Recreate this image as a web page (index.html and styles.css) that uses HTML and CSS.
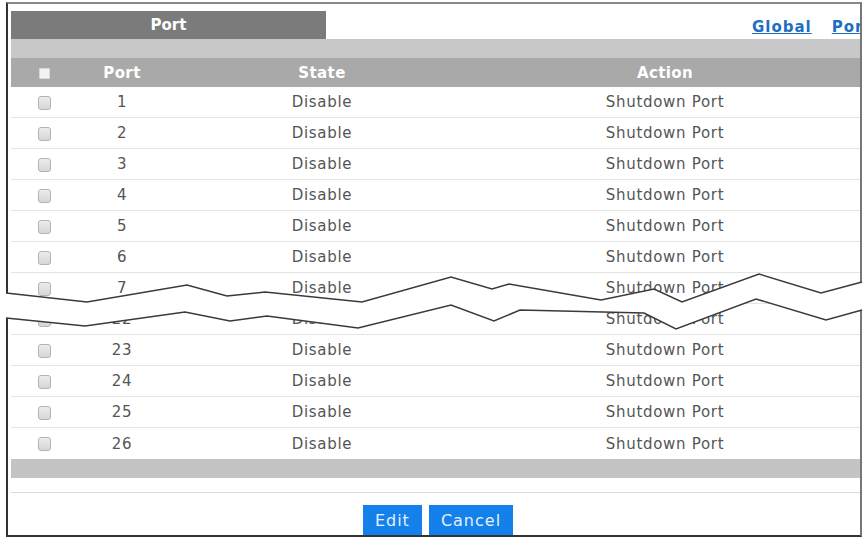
FILE: index.html
```html
<!DOCTYPE html>
<html lang="en">
<head>
    <meta charset="UTF-8">
    <title>Port Shutdown</title>
    <link rel="stylesheet" href="styles.css">
</head>
<body>
    <div class="frame">
        <div class="panel">
            <!-- Tab bar -->
            <div class="tabbar">
                <div class="tab">Port</div>
                <div class="links">
                    <a href="#">Global</a>
                    <a href="#">Port</a>
                </div>
            </div>
            <div class="band"></div>

            <!-- Port list -->
            <table class="ports">
                <colgroup>
                    <col class="c-check">
                    <col class="c-port">
                    <col class="c-state">
                    <col class="c-action">
                    <col>
                </colgroup>
                <thead>
                    <tr>
                        <th><span class="box box-head"></span></th>
                        <th>Port</th>
                        <th>State</th>
                        <th>Action</th>
                        <th></th>
                    </tr>
                </thead>
                <tbody>
                    <tr><td><span class="box"></span></td><td>1</td><td>Disable</td><td>Shutdown Port</td><td></td></tr>
                    <tr><td><span class="box"></span></td><td>2</td><td>Disable</td><td>Shutdown Port</td><td></td></tr>
                    <tr><td><span class="box"></span></td><td>3</td><td>Disable</td><td>Shutdown Port</td><td></td></tr>
                    <tr><td><span class="box"></span></td><td>4</td><td>Disable</td><td>Shutdown Port</td><td></td></tr>
                    <tr><td><span class="box"></span></td><td>5</td><td>Disable</td><td>Shutdown Port</td><td></td></tr>
                    <tr><td><span class="box"></span></td><td>6</td><td>Disable</td><td>Shutdown Port</td><td></td></tr>
                    <tr><td><span class="box"></span></td><td>7</td><td>Disable</td><td>Shutdown Port</td><td></td></tr>
                    <tr><td><span class="box"></span></td><td>22</td><td>Disable</td><td>Shutdown Port</td><td></td></tr>
                    <tr><td><span class="box"></span></td><td>23</td><td>Disable</td><td>Shutdown Port</td><td></td></tr>
                    <tr><td><span class="box"></span></td><td>24</td><td>Disable</td><td>Shutdown Port</td><td></td></tr>
                    <tr><td><span class="box"></span></td><td>25</td><td>Disable</td><td>Shutdown Port</td><td></td></tr>
                    <tr><td><span class="box"></span></td><td>26</td><td>Disable</td><td>Shutdown Port</td><td></td></tr>
                </tbody>
            </table>
            <div class="band band-foot"></div>

            <hr class="divider">

            <div class="actions">
                <button type="button" class="btn">Edit</button>
                <button type="button" class="btn">Cancel</button>
            </div>
        </div>
    </div>

    <!-- Break mark: rows 8-21 are left out -->
    <svg class="break" width="868" height="540" viewBox="0 0 868 540">
        <polygon fill="#fff" points="6,293 87,302 187,285 227,296 265,292 362,302 451,277 492,289 509,284 601,300 654,289 682,302 759,274 821,293 862,282 862,310 826,320 756,299 676,329 644,313 520,310 494,321 451,305 358,328 267,316 230,321 185,312 85,326 6,318"/>
        <polyline fill="none" stroke="#3a3a3a" stroke-width="1.5" points="6,293 87,302 187,285 227,296 265,292 362,302 451,277 492,289 509,284 601,300 654,289 682,302 759,274 821,293 862,282"/>
        <polyline fill="none" stroke="#3a3a3a" stroke-width="1.5" points="6,318 85,326 185,312 230,321 267,316 358,328 451,305 494,321 520,310 644,313 676,329 756,299 826,320 862,310"/>
    </svg>
</body>
</html>
```

FILE: styles.css
```css
/* General Styles */
body {
    margin: 0;
    background-color: #fff;
    font-family: "DejaVu Sans", "Liberation Sans", sans-serif;
    color: #555;
}

.frame {
    box-sizing: border-box;
    width: 856px;
    height: 535px;
    margin: 2px 0 0 6px;
    border: 2px solid #333;
    border-top-color: #888;
    border-right-color: #777;
    overflow: hidden;
}

.panel {
    width: 870px;
    padding: 7px 0 0 3px;
}

/* Tab bar */
.tabbar {
    display: flex;
    align-items: center;
    height: 28px;
}

.tab {
    width: 315px;
    height: 28px;
    line-height: 28px;
    background-color: #7b7b7b;
    color: #fff;
    font-weight: bold;
    font-size: 15px;
    text-align: center;
}

.links {
    display: flex;
    gap: 20px;
    margin-left: 426px;
    padding-top: 4px;
}

.links a {
    color: #1c6fc2;
    font-weight: bold;
    font-size: 15px;
    letter-spacing: 1px;
}

.band {
    height: 19px;
    background-color: #c8c8c8;
}

.band-foot {
    background-color: #c4c4c4;
}

/* Port table */
.ports {
    width: 100%;
    border-collapse: collapse;
    table-layout: fixed;
}

.c-check { width: 67px; }
.c-port { width: 88px; }
.c-state { width: 312px; }
.c-action { width: 374px; }

.ports th {
    height: 29px;
    padding: 0;
    background-color: #a9a9a9;
    color: #fff;
    font-size: 15px;
    font-weight: bold;
    letter-spacing: 0.4px;
}

.ports td {
    height: 30px;
    padding: 0;
    border-bottom: 1px solid #e4e4e4;
    text-align: center;
    font-size: 15px;
    letter-spacing: 0.7px;
}

.ports tbody tr:last-child td {
    border-bottom: none;
    height: 31px;
}

.box {
    display: inline-block;
    width: 11px;
    height: 12px;
    border: 1px solid #b4b4b4;
    border-radius: 3px;
    background: linear-gradient(#ececec, #d6d6d6);
    vertical-align: middle;
}

.box-head {
    width: 9px;
    height: 9px;
    border: 1px solid #d8d8d8;
    border-radius: 1px;
    background: #f2f2f2;
}

.divider {
    margin: 14px 0 0;
    border: none;
    border-top: 1px solid #dcdcdc;
}

.actions {
    display: flex;
    justify-content: center;
    gap: 7px;
    padding: 12px 16px 0 0;
}

.btn {
    height: 31px;
    padding: 0 12px;
    border: none;
    background-color: #1480ea;
    color: #e6f0ff;
    font-family: "DejaVu Sans", sans-serif;
    font-size: 16px;
    letter-spacing: 1px;
}

.break {
    position: absolute;
    top: 0;
    left: 0;
}
```
